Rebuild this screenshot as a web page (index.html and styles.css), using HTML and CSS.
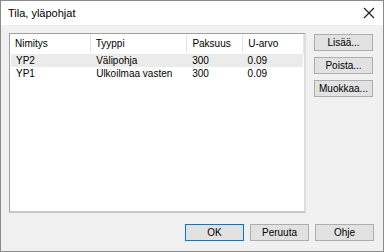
FILE: index.html
```html
<!DOCTYPE html>
<html lang="fi">

<head>
    <meta charset="UTF-8">
    <title>Tila, yläpohjat</title>
    <link rel="stylesheet" href="styles.css">
</head>

<body>
    <div class="window">
        <div class="titlebar">
            <span class="title">Tila, yläpohjat</span>
            <svg class="close" width="12" height="12" viewBox="0 0 12 12">
                <path d="M1 1 L11 11 M11 1 L1 11" stroke="#1a1a1a" stroke-width="1.1" fill="none"/>
            </svg>
        </div>

        <div class="content">
            <div class="main">
                <div class="list">
                    <div class="row header">
                        <div class="cell c1">Nimitys</div>
                        <div class="cell c2">Tyyppi</div>
                        <div class="cell c3">Paksuus</div>
                        <div class="cell c4">U-arvo</div>
                    </div>
                    <div class="row selected">
                        <div class="cell c1">YP2</div>
                        <div class="cell c2">Välipohja</div>
                        <div class="cell c3">300</div>
                        <div class="cell c4">0.09</div>
                    </div>
                    <div class="row">
                        <div class="cell c1">YP1</div>
                        <div class="cell c2">Ulkoilmaa vasten</div>
                        <div class="cell c3">300</div>
                        <div class="cell c4">0.09</div>
                    </div>
                </div>

                <div class="side">
                    <button class="btn">Lisää...</button>
                    <button class="btn">Poista...</button>
                    <button class="btn">Muokkaa...</button>
                </div>
            </div>

            <div class="footer">
                <button class="btn default">OK</button>
                <button class="btn">Peruuta</button>
                <button class="btn">Ohje</button>
            </div>
        </div>
    </div>
</body>

</html>
```

FILE: styles.css
```css
body {
    margin: 0;
    font-family: "Liberation Sans", Arial, sans-serif;
    font-size: 10px;
    color: #000;
    background: #fff;
}

.window {
    width: 382px;
    height: 250px;
    border: 1px solid #8a8a8a;
    background-color: #f0f0f0;
    display: flex;
    flex-direction: column;
}

.titlebar {
    height: 24px;
    background-color: #fff;
    display: flex;
    align-items: center;
    justify-content: space-between;
    padding: 0 7px 0 7px;
}

.title {
    font-size: 11px;
    color: #000;
}

.close {
    margin-right: 1px;
}

.content {
    flex: 1;
    display: flex;
    flex-direction: column;
    padding: 8px 9px 10px 8px;
}

.main {
    display: flex;
    gap: 8px;
}

.list {
    width: 294px;
    height: 177px;
    background-color: #fff;
    border: 1px solid #a0a0a0;
    border-right: 2px solid #dcdcdc;
    border-bottom: 2px solid #c8c8c8;
}

.row {
    display: flex;
    height: 13px;
    line-height: 13px;
    margin: 0 1px;
}

.row.header {
    height: 20px;
    line-height: 20px;
    margin: 0;
}

.row.selected {
    background-color: #ebebeb;
}

.cell {
    padding-left: 5px;
    box-sizing: border-box;
    white-space: nowrap;
    overflow: hidden;
}

.header .cell {
    border-right: 1px solid #e5e5e5;
}

.c1 { width: 81px; }
.c2 { width: 97px; }
.c3 { width: 56px; }
.c4 { width: 61px; }

.side {
    display: flex;
    flex-direction: column;
    gap: 6px;
    padding-top: 1px;
}

.btn {
    width: 59px;
    height: 17px;
    padding: 0;
    font-family: "Liberation Sans", Arial, sans-serif;
    font-size: 10px;
    color: #000;
    background-color: #e1e1e1;
    border: 1px solid #adadad;
}

.btn.default {
    border-color: #0078d7;
}

.footer {
    margin-top: auto;
    display: flex;
    justify-content: flex-end;
    gap: 6px;
}
```
